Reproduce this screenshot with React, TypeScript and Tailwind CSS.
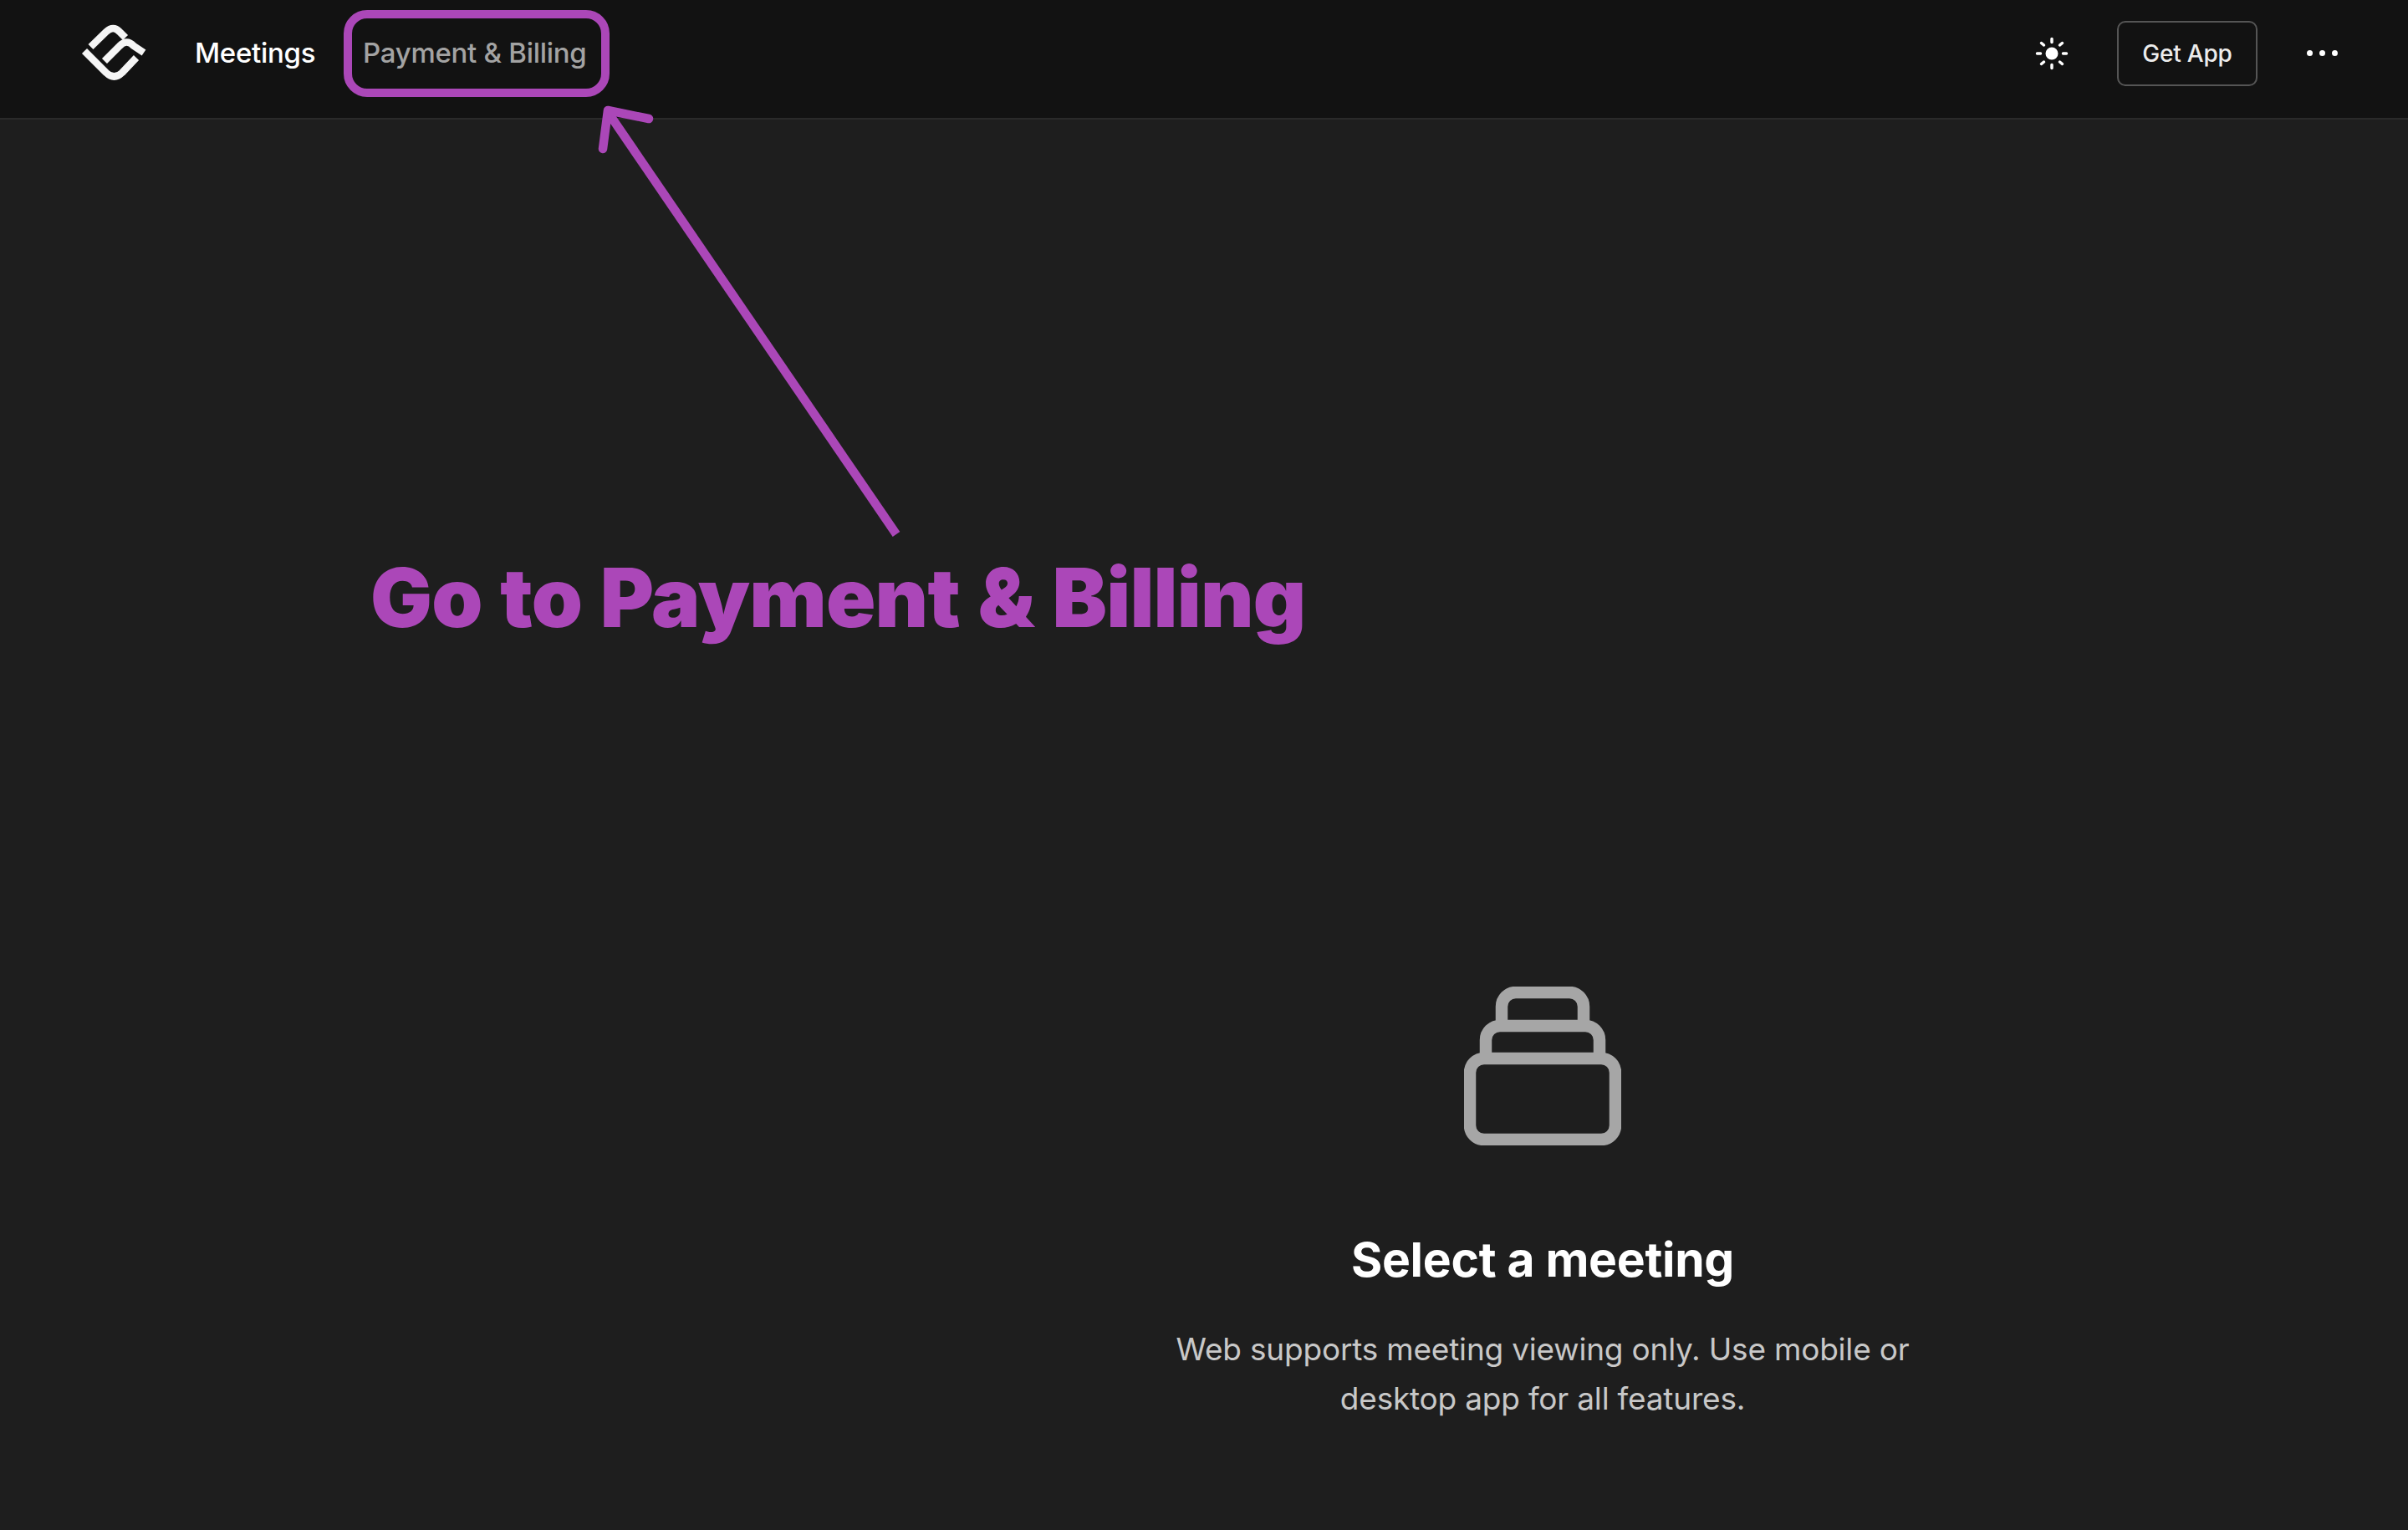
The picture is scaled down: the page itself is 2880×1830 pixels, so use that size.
const font = { fontFamily: '"Inter", "Liberation Sans", sans-serif' };

function Logo() {
  return (
    <svg width="110" height="110" viewBox="0 0 110 110" fill="none" stroke="#f5f5f5" strokeWidth="8.5" strokeLinejoin="round" className="shrink-0">
      <path d="M28.5 47 L47 29 Q55.5 21 63 29 L70 36" />
      <path d="M45 64 L63 46 Q71.5 37 80 46 L92 54" />
      <path d="M21 52 L47 78 Q56.5 87 66 78 L83 60" />
    </svg>
  );
}

function SunIcon() {
  return (
    <svg width="40" height="40" viewBox="0 0 40 40" fill="none" stroke="#ffffff" strokeWidth="3.5" strokeLinecap="round" className="shrink-0">
      <circle cx="20" cy="20" r="7.5" fill="#ffffff" stroke="none" />
      <path d="M20 2.5 V6.5 M20 33.5 V37.5 M2.5 20 H6.5 M33.5 20 H37.5 M7.5 7.5 L10.5 10 M29.5 30 L32.5 32.5 M7.5 32.5 L10.5 30 M29.5 10 L32.5 7.5" />
    </svg>
  );
}

function StackIcon() {
  return (
    <svg width="188" height="190" viewBox="0 0 188 190" fill="none" stroke="#a6a6a6" strokeWidth="14.5" className="block">
      <rect x="7" y="86" width="174" height="97" rx="17" />
      <path d="M26 86 V64 A17 17 0 0 1 43 47 H145 A17 17 0 0 1 162 64 V86" />
      <path d="M45 47 V24 A17 17 0 0 1 62 7 H126 A17 17 0 0 1 143 24 V47" />
    </svg>
  );
}

export default function App() {
  return (
    <div style={font} className="relative w-full h-[1830px] overflow-hidden bg-[#1e1e1e]">
      <header className="h-[143px] flex items-center bg-[#121212] border-b-2 border-[#2a2a2a] pl-[80px] pr-[84px] pb-[14px]">
        <Logo />
        <nav className="flex items-center ml-[43px] gap-[57px] text-[33px] font-medium tracking-[-0.3px]">
          <span className="text-white">Meetings</span>
          <span className="relative text-[#a3a3a3]">
            Payment &amp; Billing
            <span className="absolute left-[-23px] right-[-28px] top-[-27px] h-[104px] rounded-[28px] border-[10px] border-[#ab47b8]" />
          </span>
        </nav>
        <div className="ml-auto flex items-center">
          <SunIcon />
          <button className="ml-[58px] w-[168px] h-[78px] rounded-[10px] border-2 border-[#555555] text-[28px] font-medium tracking-[-0.2px] text-[#ececec]">Get App</button>
          <div className="ml-[59px] flex items-center gap-[8px]">
            <span className="w-[7px] h-[7px] rounded-full bg-white" />
            <span className="w-[7px] h-[7px] rounded-full bg-white" />
            <span className="w-[7px] h-[7px] rounded-full bg-white" />
          </div>
        </div>
      </header>

      <main className="flex">
        <div className="w-[810px] shrink-0" />
        <div className="flex-1 flex flex-col items-center pt-[1037px] text-center">
          <StackIcon />
          <h2 className="mt-[103px] text-[57px] leading-[68px] font-bold text-white tracking-[-0.3px]">Select a meeting</h2>
          <p className="mt-[43px] w-[900px] text-[37px] leading-[59px] tracking-[-0.2px] text-[#c8c8c8]">
            Web supports meeting viewing only. Use mobile or<br />desktop app for all features.
          </p>
        </div>
      </main>

      {/* annotation */}
      <svg className="absolute left-0 top-0" width="1200" height="700" fill="none" stroke="#ab47b8" strokeWidth="10.5">
        <path d="M1072 639 L727 134" />
        <path d="M721 178 L727 132 L776 142" strokeLinecap="round" strokeLinejoin="round" />
      </svg>
      <div className="absolute left-[443px] top-[655px] text-[98px] leading-[120px] font-black tracking-[-0.8px] [word-spacing:3px] text-[#ab47b8] whitespace-nowrap">Go to Payment &amp; Billing</div>
    </div>
  );
}
